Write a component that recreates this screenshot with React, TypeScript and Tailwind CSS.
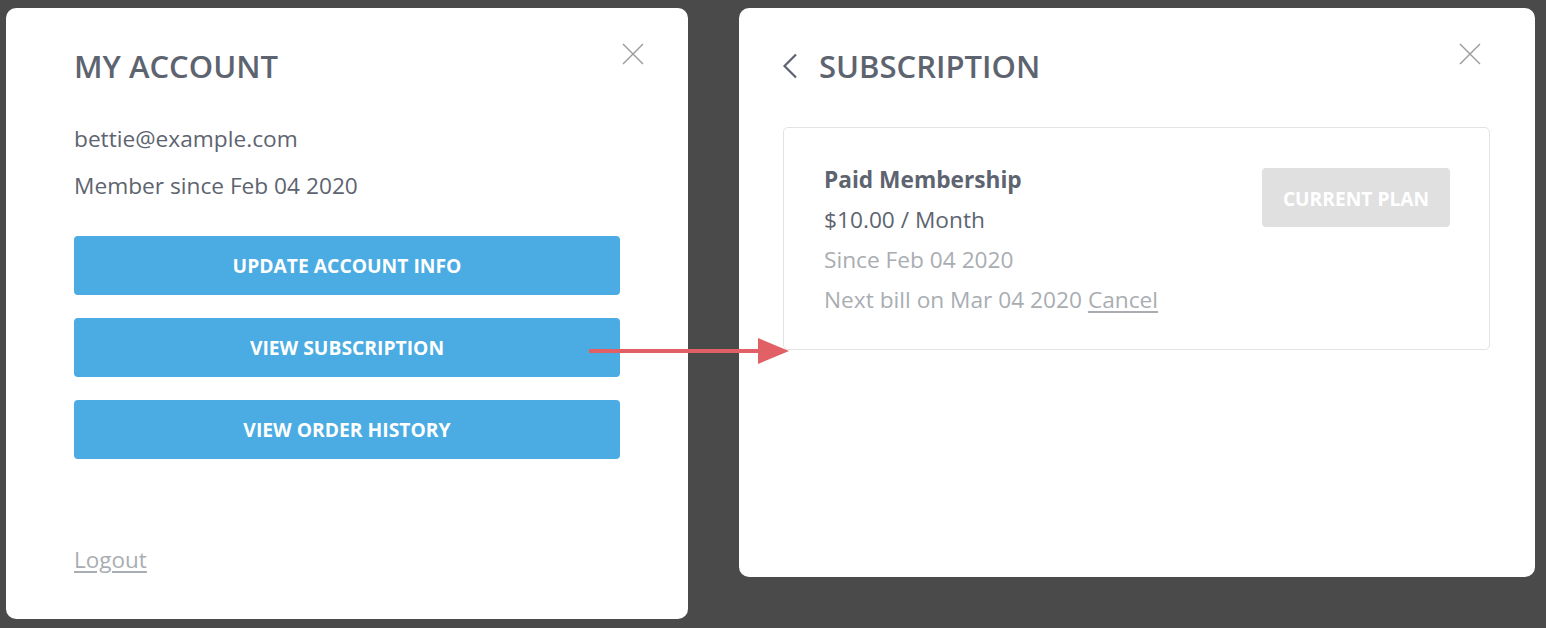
import React from "react";

const CloseIcon = () => (
  <svg width="22" height="22" viewBox="0 0 22 22" fill="none">
    <path d="M1 1L21 21M21 1L1 21" stroke="#9a9a9a" strokeWidth="1.4" />
  </svg>
);

const AccountPanel = () => {
  return (
    <div className="relative flex flex-col w-[682px] h-[611px] bg-white rounded-[10px] pl-[68px] pr-[68px] pt-[36px] pb-[44px]">
      <div className="absolute right-[44px] top-[35px]">
        <CloseIcon />
      </div>
      <h1 className="text-[31px] leading-[44px] font-semibold text-[#5d6470]">MY ACCOUNT</h1>
      <p className="mt-[36px] text-[22.7px] leading-[30px] text-[#5d6470]">bettie@example.com</p>
      <p className="mt-[17px] text-[22.7px] leading-[30px] text-[#5d6470]">Member since Feb 04 2020</p>
      <div className="mt-[35px] flex flex-col gap-[23px] w-[546px]">
        {["UPDATE ACCOUNT INFO", "VIEW SUBSCRIPTION", "VIEW ORDER HISTORY"].map((label) => (
          <button
            key={label}
            className="h-[59px] pt-[2px] rounded-[4px] bg-[#4aace2] text-white font-bold text-[19.3px]"
          >
            {label}
          </button>
        ))}
      </div>
      <a className="mt-auto text-[22.5px] leading-[30px] text-[#a9adb2] underline underline-offset-[3px] w-fit">
        Logout
      </a>
    </div>
  );
};

const SubscriptionPanel = () => {
  return (
    <div className="relative flex flex-col w-[796px] h-[569px] bg-white rounded-[10px] pl-[44px] pr-[45px] pt-[36px]">
      <div className="absolute right-[54px] top-[35px]">
        <CloseIcon />
      </div>
      <div className="flex items-center gap-[21px]">
        <svg width="16" height="26" viewBox="0 0 16 26" fill="none" className="ml-[-1px]">
          <path d="M14 1.5L2.5 13L14 24.5" stroke="#5d6470" strokeWidth="2.2" />
        </svg>
        <h1 className="text-[31px] leading-[44px] font-semibold text-[#5d6470]">SUBSCRIPTION</h1>
      </div>
      <div className="mt-[39px] h-[223px] border border-[#e3e3e3] rounded-[5px] flex justify-between pl-[40px] pr-[39px] pt-[40px]">
        <div className="flex flex-col text-[22.7px] leading-[40px]">
          <p className="font-bold text-[#5d6470] leading-[24px]">Paid Membership</p>
          <p className="mt-[8px] text-[#5d6470]">$10.00 / Month</p>
          <p className="text-[#a9adb2]">Since Feb 04 2020</p>
          <p className="text-[#a9adb2]">
            Next bill on Mar 04 2020{" "}
            <a className="underline underline-offset-[3px]">Cancel</a>
          </p>
        </div>
        <button className="h-[59px] w-[188px] pt-[3px] rounded-[4px] bg-[#e0e0e0] text-white font-bold text-[19.2px]">
          CURRENT PLAN
        </button>
      </div>
    </div>
  );
};

export default function App() {
  return (
    <div
      className="relative flex items-start gap-[51px] w-[1546px] h-[628px] bg-[#4a4a4a] pl-[6px] pt-[8px]"
      style={{ fontFamily: '"Open Sans", "Liberation Sans", sans-serif' }}
    >
      <AccountPanel />
      <SubscriptionPanel />
      <svg
        className="absolute left-[589px] top-[336px]"
        width="204"
        height="32"
        viewBox="0 0 204 32"
        fill="none"
      >
        <rect x="0" y="13" width="172" height="4" fill="#e06065" />
        <path d="M169 2L200 15L169 28Z" fill="#e06065" />
      </svg>
    </div>
  );
}
